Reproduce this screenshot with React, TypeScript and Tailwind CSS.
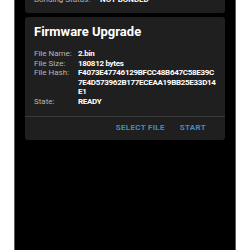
export default function App() {
  const rows: [string, string][] = [
    ['File Name:', '2.bin'],
    ['File Size:', '180812 bytes'],
    ['File Hash:', 'F4073E47746129BFCC48B647C58E39C7E4D573962B177ECEAA19BB25E33D14E1'],
    ['State:', 'READY'],
  ];

  return (
    <div className="w-[250px] h-[250px] bg-white overflow-hidden font-['Roboto',sans-serif]">
      <div className="ml-[14px] w-[222px] h-[250px] bg-black border-x border-[#5a5a5a] px-[10px] flex flex-col gap-[4px]">
        {/* Device info card (scrolled) */}
        <div className="-mt-[20px] h-[33px] bg-[#1f1f1f] rounded-[3px] px-[9px] flex items-end pb-[8px]">
          <div className="flex text-[8px] leading-[10px]">
            <span className="w-[66px] text-[#b5b5b5]">Bonding Status:</span>
            <span className="text-white font-bold">NOT BONDED</span>
          </div>
        </div>

        {/* Firmware upgrade card */}
        <div className="bg-[#1f1f1f] rounded-[3px]">
          <div className="px-[9px] pt-[7px] pb-[9px]">
            <h2 className="text-white font-bold text-[13px] leading-[16px]">Firmware Upgrade</h2>
            <div className="mt-[9px] flex flex-col">
              {rows.map(([label, value]) => (
                <div key={label} className="flex text-[8px] leading-[9.6px]">
                  <span className="w-[44px] shrink-0 text-[#b5b5b5]">{label}</span>
                  <span className="w-[138px] text-white font-bold break-all tracking-[-0.3px]">{value}</span>
                </div>
              ))}
            </div>
          </div>
          <div className="h-px bg-[#3a3a3a]" />
          <div className="flex justify-end gap-[15px] pr-[19px] h-[23px] items-center">
            <button className="text-[8px] font-bold tracking-[0.3px] text-[#3f8fbf]">SELECT FILE</button>
            <button className="text-[8px] font-bold tracking-[0.3px] text-[#3f8fbf]">START</button>
          </div>
        </div>
      </div>
    </div>
  );
}
